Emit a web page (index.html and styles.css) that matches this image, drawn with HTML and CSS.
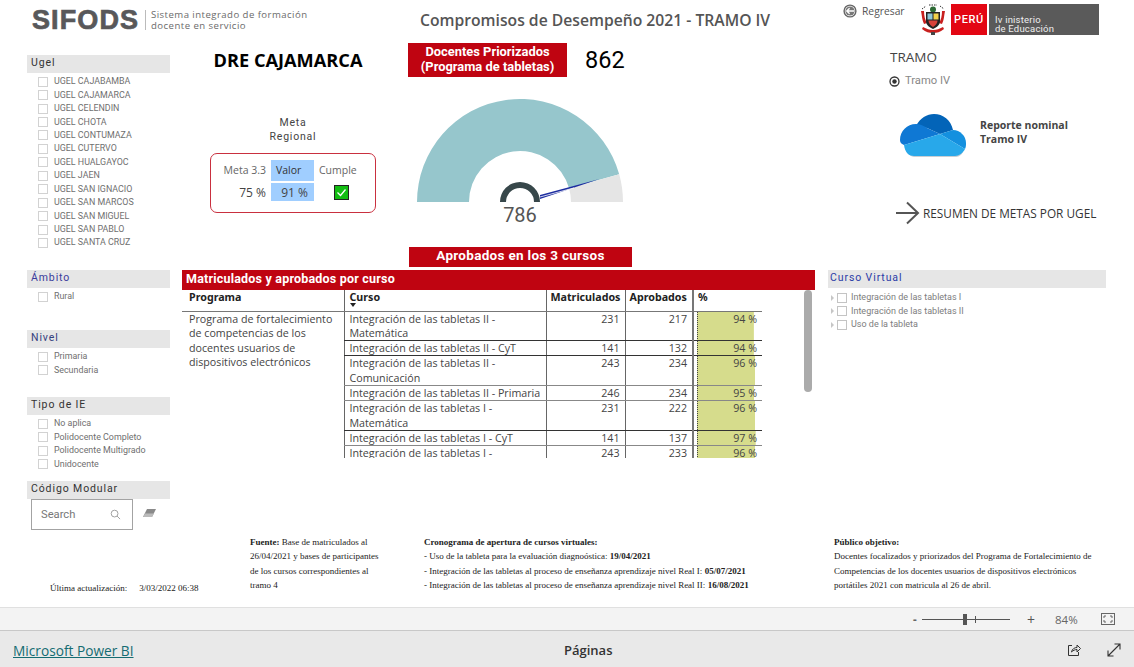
FILE: index.html
```html
<!DOCTYPE html>
<html lang="es">
<head>
<meta charset="utf-8">
<title>Compromisos de Desempeño 2021</title>
<link rel="stylesheet" href="styles.css">
</head>
<body>
<div class="page">
  <main class="canvas">
    <header class="head">
      <div class="brand">
        <span class="brand-name">SIFODS</span>
        <span class="brand-text">Sistema integrado de formación<br>docente en servicio</span>
      </div>
      <h1 class="title">Compromisos de Desempeño 2021 - TRAMO IV</h1>
      <div class="back">
        <svg class="back-icon" viewBox="0 0 14 14"><circle cx="7" cy="7" r="6.6" fill="#666"/><circle cx="7" cy="7" r="5.2" fill="#fff"/><circle cx="7" cy="7" r="4.6" fill="#777"/><path d="M11 7H4M6.6 4.2 3.8 7l2.8 2.8" fill="none" stroke="#fff" stroke-width="1.4"/></svg>
        <span>Regresar</span>
      </div>
      <svg class="crest" viewBox="0 0 26 31">
        <path d="M2 5 6 2M9 1h8M20 2l4 3" stroke="#333" stroke-width="1" stroke-dasharray="1.5 1" fill="none"/>
        <path d="M1 7c1 5 1 9 3 13l3-1c-2-3-3-7-3-12zM25 7c-1 5-1 9-3 13l-3-1c2-3 3-7 3-12z" fill="#c8201f"/>
        <circle cx="13" cy="5.500" r="3" fill="#2d6a35"/>
        <path d="M6 8h14v9c0 4-3 6-7 8-4-2-7-4-7-8z" fill="#222"/>
        <path d="M7.500 9.500h5v6h-5z" fill="#8fc7d8"/><path d="M13.500 9.500h5v6h-5z" fill="#f1d24a"/><path d="M8.500 16.500h9c0 3-2 5-4.500 6.500-2.500-1.500-4.500-3.500-4.500-6.500z" fill="#d8413a"/>
        <path d="M3 23c4 2 6 3 10 3s6-1 10-3l1 2c-4 3-7 4-11 4S6 28 2 25z" fill="#c8201f"/>
        <path d="M11 28h4v3h-4z" fill="#444"/>
      </svg>
      <div class="peru">PERÚ</div>
      <div class="minedu">Iv inisterio<br>de Educación</div>
    </header>

    <aside class="sidebar">
      <section class="filter filter-ugel">
        <h2 class="filter-title">Ugel</h2>
        <ul class="opts">
          <li class="opt"><i class="box"></i>UGEL CAJABAMBA</li>
          <li class="opt"><i class="box"></i>UGEL CAJAMARCA</li>
          <li class="opt"><i class="box"></i>UGEL CELENDIN</li>
          <li class="opt"><i class="box"></i>UGEL CHOTA</li>
          <li class="opt"><i class="box"></i>UGEL CONTUMAZA</li>
          <li class="opt"><i class="box"></i>UGEL CUTERVO</li>
          <li class="opt"><i class="box"></i>UGEL HUALGAYOC</li>
          <li class="opt"><i class="box"></i>UGEL JAEN</li>
          <li class="opt"><i class="box"></i>UGEL SAN IGNACIO</li>
          <li class="opt"><i class="box"></i>UGEL SAN MARCOS</li>
          <li class="opt"><i class="box"></i>UGEL SAN MIGUEL</li>
          <li class="opt"><i class="box"></i>UGEL SAN PABLO</li>
          <li class="opt"><i class="box"></i>UGEL SANTA CRUZ</li>
        </ul>
      </section>
      <section class="filter filter-ambito">
        <h2 class="filter-title blue">Ámbito</h2>
        <ul class="opts"><li class="opt"><i class="box"></i>Rural</li></ul>
      </section>
      <section class="filter filter-nivel">
        <h2 class="filter-title navy">Nivel</h2>
        <ul class="opts">
          <li class="opt"><i class="box"></i>Primaria</li>
          <li class="opt"><i class="box"></i>Secundaria</li>
        </ul>
      </section>
      <section class="filter filter-tipo">
        <h2 class="filter-title">Tipo de IE</h2>
        <ul class="opts">
          <li class="opt"><i class="box"></i>No aplica</li>
          <li class="opt"><i class="box"></i>Polidocente Completo</li>
          <li class="opt"><i class="box"></i>Polidocente Multigrado</li>
          <li class="opt"><i class="box"></i>Unidocente</li>
        </ul>
      </section>
      <section class="filter">
        <h2 class="filter-title">Código Modular</h2>
        <div class="search-row">
          <div class="search">
            <span>Search</span>
            <svg class="search-icon" viewBox="0 0 12 12"><circle cx="5" cy="5" r="3.700" fill="none" stroke="#999"/><path d="M7.700 7.700 11 11" stroke="#999"/></svg>
          </div>
          <svg class="eraser" viewBox="0 0 13 9"><path d="M4 0h9L9 8H0z" fill="#8a8a8a"/><path d="M2 4.500h9L9 8H0z" fill="#bbb"/></svg>
        </div>
      </section>
    </aside>

    <section class="overview">
      <div class="regional">
        <div class="dre">DRE CAJAMARCA</div>
        <div class="meta-title">Meta<br>Regional</div>
        <div class="meta-box">
          <span class="mb-head">Meta 3.3</span>
          <span class="mb-head mb-blue">Valor</span>
          <span class="mb-head mb-center">Cumple</span>
          <span class="mb-val">75 %</span>
          <span class="mb-val mb-blue">91 %</span>
          <span class="mb-check"><svg class="check" viewBox="0 0 15 15"><rect x=".5" y=".5" width="14" height="14" fill="#12bd12" stroke="#222"/><path d="m3.500 7.500 3 3 5-6" fill="none" stroke="#fff" stroke-width="1.300"/></svg></span>
        </div>
      </div>
      <div class="gauge-col">
        <div class="kpi">
          <div class="banner banner-kpi">Docentes Priorizados<br>(Programa de tabletas)</div>
          <div class="kpi-num">862</div>
        </div>
        <svg class="gauge" viewBox="0 0 232 170">
          <path d="M9 125A103 103 0 0 1 211.200 97.300L161.100 111.300A51 51 0 0 0 61 125Z" fill="#96c6cc"/>
          <path d="M211.200 97.300A103 103 0 0 1 215 125H163A51 51 0 0 0 161.100 111.300Z" fill="#e5e5e5"/>
          <path d="M92 125A20 20 0 0 1 132 125H126A14 14 0 0 0 98 125Z" fill="#37474a"/>
          <path d="M132 118 191.500 102 132 122Z" fill="#1c2ca0"/>
          <path d="M132 120 166 110.900" stroke="#fff" stroke-width=".8"/>
          <text class="gauge-num" x="112" y="145" text-anchor="middle">786</text>
        </svg>
        <div class="banner banner-approved">Aprobados en los 3 cursos</div>
      </div>
    </section>

    <aside class="links">
      <div class="tramo-title">TRAMO</div>
      <div class="tramo-opt">
        <svg class="radio" viewBox="0 0 11 11"><circle cx="5.500" cy="5.500" r="4.500" fill="none" stroke="#333" stroke-width="1.300"/><circle cx="5.500" cy="5.500" r="2.200" fill="#333"/></svg>
        <span>Tramo IV</span>
      </div>
      <div class="report">
        <svg class="cloud" viewBox="0 0 66 44">
          <path d="M8 38c2 4 4 5 7 5h40c3 0 6-1 8-5z" fill="#c9ced3"/>
          <path d="M16 12C20 4 27 0 34 0c9 0 17 6 19 16L40 20 27 14z" fill="#0364b8"/>
          <path d="M27 14c-3-2-7-4-11-4C7 10 0 17 0 26c0 2 1 4 4 5l36-11z" fill="#0f78d4"/>
          <path d="M53 16c7 0 13 6 13 13 0 2 0 4-1 6L40 20z" fill="#1490df"/>
          <path d="M4 31 40 20l25 15c-2 4-6 7-10 7H14c-5 0-9-3-10-11z" fill="#28a8ea"/>
        </svg>
        <div class="report-text">Reporte nominal<br>Tramo IV</div>
      </div>
      <div class="summary">
        <svg class="arrow" viewBox="0 0 24 24"><path d="M0 12H22M11 1.500 22 12 11 22.500" fill="none" stroke="#555" stroke-width="2"/></svg>
        <span>RESUMEN DE METAS POR UGEL</span>
      </div>
    </aside>

    <section class="matrix">
      <h2 class="matrix-title">Matriculados y aprobados por curso</h2>
      <div class="table-clip">
        <table class="tbl">
          <colgroup><col class="c-prog"><col class="c-curso"><col class="c-mat"><col class="c-apr"><col class="c-pct"></colgroup>
          <thead>
            <tr><th>Programa</th><th class="sorted">Curso<i class="sort"></i></th><th>Matriculados</th><th>Aprobados</th><th>%</th></tr>
          </thead>
          <tbody>
            <tr class="dark"><td class="prog" rowspan="7">Programa de fortalecimiento de competencias de los docentes usuarios de dispositivos electrónicos</td><td>Integración de las tabletas II - Matemática</td><td class="num">231</td><td class="num">217</td><td class="num pct" style="--bar:94%">94 %</td></tr>
            <tr class="dark"><td>Integración de las tabletas II - CyT</td><td class="num">141</td><td class="num">132</td><td class="num pct" style="--bar:94%">94 %</td></tr>
            <tr><td>Integración de las tabletas II - Comunicación</td><td class="num">243</td><td class="num">234</td><td class="num pct" style="--bar:96%">96 %</td></tr>
            <tr><td>Integración de las tabletas II - Primaria</td><td class="num">246</td><td class="num">234</td><td class="num pct" style="--bar:95%">95 %</td></tr>
            <tr class="dark"><td>Integración de las tabletas I - Matemática</td><td class="num">231</td><td class="num">222</td><td class="num pct" style="--bar:96%">96 %</td></tr>
            <tr><td>Integración de las tabletas I - CyT</td><td class="num">141</td><td class="num">137</td><td class="num pct" style="--bar:97%">97 %</td></tr>
            <tr><td>Integración de las tabletas I - Comunicación</td><td class="num">243</td><td class="num">233</td><td class="num pct" style="--bar:96%">96 %</td></tr>
          </tbody>
        </table>
      </div>
      <div class="scrollbar"></div>
    </section>

    <aside class="course">
      <h2 class="filter-title blue-strong">Curso Virtual</h2>
      <ul class="course-opts">
        <li class="course-opt"><i class="tri"></i><i class="box"></i>Integración de las tabletas I</li>
        <li class="course-opt"><i class="tri"></i><i class="box"></i>Integración de las tabletas II</li>
        <li class="course-opt"><i class="tri"></i><i class="box"></i>Uso de la tableta</li>
      </ul>
    </aside>

    <div class="updated"><span>Última actualización:</span><span>3/03/2022 06:38</span></div>
    <section class="notes">
      <p class="note note-source"><b>Fuente:</b> Base de matriculados al 26/04/2021 y bases de participantes de los cursos correspondientes al tramo 4</p>
      <p class="note note-schedule"><b>Cronograma de apertura de cursos virtuales:</b><br>- Uso de la tableta para la evaluación diagnoóstica: <b>19/04/2021</b><br>- Integración de las tabletas al proceso de enseñanza aprendizaje nivel Real I: <b>05/07/2021</b><br>- Integración de las tabletas al proceso de enseñanza aprendizaje nivel Real II: <b>16/08/2021</b></p>
      <p class="note note-target"><b>Público objetivo:</b><br>Docentes focalizados y priorizados del Programa de Fortalecimiento de Competencias de los docentes usuarios de dispositivos electrónicos portátiles 2021 con matricula al 26 de abril.</p>
    </section>
  </main>

  <div class="zoombar">
    <span class="z-minus">-</span>
    <span class="z-track"><i class="z-tick"></i><i class="z-thumb"></i></span>
    <span class="z-plus">+</span>
    <span class="z-pct">84%</span>
    <svg class="z-fit" viewBox="0 0 14 12"><rect x=".5" y=".5" width="13" height="11" fill="none" stroke="#666"/><path d="M3 5V3h2M9 3h2v2M11 7v2H9M5 9H3V7" fill="none" stroke="#666"/></svg>
  </div>

  <footer class="foot">
    <a class="pbi">Microsoft Power BI</a>
    <span class="pages">Páginas</span>
    <div class="foot-icons">
      <svg class="foot-share" viewBox="0 0 14 14"><path d="M5 2.500H1.500v10h10V9" fill="none" stroke="#333"/><path d="M4.500 9c.5-3 3-4.500 5.500-4.500V2l3.500 3.500L10 9V6.500C8 6.500 6 7.500 4.500 9z" fill="none" stroke="#333"/></svg>
      <svg class="foot-expand" viewBox="0 0 14 14"><path d="M1 13 13 1M7.500 1H13v5.500M1 7.500V13h5.500" fill="none" stroke="#333" stroke-width="1.100"/></svg>
    </div>
  </footer>
</div>
</body>
</html>
```

FILE: styles.css
```css
* { box-sizing: border-box; }
html, body { margin: 0; padding: 0; background: #fff; }
body { font-family: "Open Sans", "Noto Sans", sans-serif; color: #333; overflow: hidden; }
h1, h2, p, ul { margin: 0; padding: 0; }
ul { list-style: none; }
i { display: block; }

.page { width: 1134px; height: 667px; display: flex; flex-direction: column; }
.canvas {
  height: 607px;
  display: grid;
  grid-template-columns: 182px 646px 306px;
  grid-template-rows: 43px 227px 265px 72px;
}

/* header */
.head { grid-column: 1 / -1; grid-row: 1; display: flex; align-items: flex-start; }
.brand { width: 420px; padding: 6px 0 0 32px; display: flex; align-items: center; }
.brand-name { font-family: "Liberation Sans", sans-serif; font-weight: 700; font-size: 27px; line-height: 28px; letter-spacing: 1.100px; color: #58585a; -webkit-text-stroke: .7px #58585a; width: 113px; }
.brand-text { border-left: 1px solid #bbb; padding-left: 5px; height: 20px; font-size: 9.600px; line-height: 10.500px; letter-spacing: .45px; color: #6b6b6b; white-space: nowrap; }
.title { width: 423px; font-size: 15.700px; line-height: 20px; font-weight: 600; color: #555; padding-top: 10px; white-space: nowrap; }
.back { width: 77px; display: flex; align-items: center; gap: 5px; font-size: 10.300px; color: #555; height: 14px; margin-top: 4px; }
.back-icon { width: 14px; height: 14px; }
.crest { width: 26px; height: 31px; margin: 4px 5px 0 0; }
.peru { width: 36px; height: 31px; margin-top: 4px; background: #e30613; color: #fff; font: 500 11px/31px Roboto, sans-serif; letter-spacing: .6px; text-align: center; }
.minedu { width: 110px; height: 31px; margin: 4px 0 0 2px; background: #5a5a5a; color: #eee; font: 400 9.500px/9px Roboto, sans-serif; padding: 11px 0 0 6px; letter-spacing: .2px; white-space: nowrap; }

/* sidebar */
.sidebar { grid-column: 1; grid-row: 2 / 4; padding: 12px 12px 0 27px; display: flex; flex-direction: column; }
.filter-ugel { height: 215px; }
.filter-ambito { height: 60px; }
.filter-nivel { height: 67px; }
.filter-tipo { height: 84px; }
.filter-title { background: #e6e6e6; height: 18px; font: 400 10.500px/15.500px Roboto, sans-serif; letter-spacing: .9px; color: #333; padding-left: 4px; }
.blue { color: #3a3a9c; }
.navy { color: #35407e; }
.blue-strong { color: #2b3ca6; padding-left: 2px; }
.opts { padding: 2px 0 0 11px; }
.opt { display: flex; align-items: center; height: 13.450px; font: 400 8.900px/13px Roboto, sans-serif; color: #6f6f6f; white-space: nowrap; }
.box { width: 10px; height: 10px; border: 1px solid #d2d2d2; background: #fff; flex: none; margin-right: 6px; }
.search-row { display: flex; align-items: center; gap: 10px; padding-left: 4px; }
.search { width: 102px; height: 31px; border: 1.500px solid #a3a3a3; display: flex; align-items: center; justify-content: space-between; padding: 0 11px 0 9px; font: 400 11.200px/14px Roboto, sans-serif; color: #777; }
.search-icon { width: 11px; height: 11px; }
.eraser { width: 13px; height: 9px; margin-top: -3px; }

/* overview */
.overview { grid-column: 2; grid-row: 2; display: flex; }
.regional { width: 226px; padding-left: 28px; }
.dre { width: 166px; font-size: 18.200px; line-height: 26px; font-weight: 700; color: #000; padding-top: 4px; height: 30px; text-align: center; margin-left: -5px; white-space: nowrap; }
.meta-title { width: 166px; margin-top: 43px; text-align: center; font: 400 10.500px/13.500px Roboto, sans-serif; letter-spacing: .8px; color: #444; }
.meta-box { width: 166px; height: 60px; margin-top: 10px; border: 1px solid #c9303f; border-radius: 7px; padding: 6px 0 0 0; display: grid; grid-template-columns: 55px 43px 43px; grid-template-rows: 21px 18px; column-gap: 5px; row-gap: 2px; font-size: 10.500px; justify-content: start; }
.mb-head { line-height: 20px; color: #666; text-align: right; white-space: nowrap; }
.mb-blue { background: #a0ceff; color: #333; text-align: left; padding-left: 5px; }
.mb-center { text-align: left; padding-left: 0; }
.mb-val { line-height: 19px; font-size: 12px; color: #444; text-align: right; }
.mb-val.mb-blue { text-align: right; padding: 0 6px 0 0; }
.mb-check { display: flex; justify-content: center; align-items: center; padding-left: 1px; }
.check { width: 15px; height: 15px; }

.gauge-col { width: 240px; }
.kpi { display: flex; align-items: center; height: 34px; }
.banner { background: #bf0411; color: #fff; text-align: center; font-family: Roboto, sans-serif; font-weight: 700; }
.banner-kpi { width: 159px; height: 34px; font-size: 12.900px; line-height: 15px; padding-top: 1px; }
.kpi-num { margin-left: 18px; font: 400 23.500px/34px Roboto, sans-serif; color: #000; }
.gauge { display: block; width: 232px; height: 170px; }
.gauge-num { font: 400 20px Roboto, sans-serif; fill: #555; }
.banner-approved { width: 223px; height: 20px; margin-left: 1px; font-size: 13.500px; line-height: 17px; letter-spacing: .3px; }

/* links */
.links { grid-column: 3; grid-row: 2; padding: 6px 0 0 62px; }
.tramo-title { font-size: 13.500px; line-height: 17px; color: #444; }
.tramo-opt { display: flex; align-items: center; gap: 5px; margin-top: 7px; height: 16px; font: 400 11.200px/16px Roboto, sans-serif; color: #888; margin-left: -1px; }
.radio { width: 11px; height: 11px; }
.report { display: flex; align-items: center; gap: 14px; margin: 25px 0 0 10px; }
.cloud { width: 66px; height: 44px; flex: none; }
.report-text { font-size: 10.500px; line-height: 14px; font-weight: 700; color: #444; white-space: nowrap; margin-top: -8px; }
.summary { display: flex; align-items: center; gap: 3px; margin: 43px 0 0 6px; font-size: 11.800px; color: #333; white-space: nowrap; }
.arrow { width: 24px; height: 24px; flex: none; }

/* matrix */
.matrix { grid-column: 2; grid-row: 3; position: relative; }
.matrix-title { width: 633px; height: 20px; background: #bf0411; color: #fff; font: 700 12.500px/18px Roboto, sans-serif; letter-spacing: .2px; padding-left: 4px; }
.table-clip { width: 580px; height: 168px; overflow: hidden; }
.tbl { border-collapse: collapse; table-layout: fixed; width: 580px; font-size: 10.700px; line-height: 14.300px; color: #444; }
.c-prog { width: 162px; }
.c-curso { width: 202px; }
.c-mat { width: 79px; }
.c-apr { width: 68px; }
.c-pct { width: 69px; }
.tbl th { height: 21px; padding: 0 5px; text-align: left; font: 700 10.700px/14px "Noto Sans", sans-serif; color: #222; vertical-align: top; border-left: 1px solid #666; border-bottom: 1px solid #777; white-space: nowrap; }
.tbl th:first-child { border-left: 0; padding-left: 7px; }
.tbl th:nth-child(3), .tbl th:nth-child(4), .tbl th:nth-child(5) { padding-left: 4px; }
.tbl th:nth-child(5) { border-left: 2px solid #777; }
.sorted { position: relative; }
.sort { position: absolute; left: 5px; top: 13px; width: 0; height: 0; border: 3px solid transparent; border-top: 4px solid #222; border-bottom: 0; }
.tbl td { padding: 0 5px; vertical-align: top; border-left: 1px solid #666; border-bottom: 1px solid #888; }
.tbl tr.dark td { border-bottom-color: #333; }
.tbl td.prog, .tbl tr.dark td.prog { border: 0; padding: 0 7px; line-height: 14.500px; }
.num { text-align: right; white-space: nowrap; }
.tbl td.pct { border-left: 2px solid #777; padding-right: 5px; background: repeating-linear-gradient(#444 0 1px, transparent 1px 2px) no-repeat 3px 0 / 1px 100%, linear-gradient(#d6dc8c, #d6dc8c) no-repeat 3px 0 / calc(var(--bar) * .89) 100%; }
.scrollbar { position: absolute; left: 622px; top: 20px; width: 8px; height: 102px; border-radius: 4px; background: #ababab; }

/* course filter */
.course { grid-column: 3; grid-row: 3; width: 278px; }
.course-opts { padding: 3px 0 0 3px; }
.course-opt { display: flex; align-items: center; height: 13.500px; font: 400 9px/13px Roboto, sans-serif; color: #7d7d7d; white-space: nowrap; }
.course-opt .box { margin-right: 4px; border-color: #c4c4c4; }
.tri { width: 0; height: 0; border: 3px solid transparent; border-left: 3px solid #c6c6c6; border-right: 0; margin-right: 3px; }

/* notes */
.updated { grid-column: 1; grid-row: 4; padding: 48px 0 0 50px; display: flex; gap: 12px; font: 400 9px/11px "Liberation Serif", serif; color: #222; white-space: nowrap; }
.notes { grid-column: 2 / 4; grid-row: 4; display: flex; font: 400 9px/14.350px "Liberation Serif", serif; color: #222; }
.note { flex: none; }
.note-source { width: 133px; margin-left: 68px; }
.note-schedule { width: 410px; margin-left: 41px; white-space: nowrap; }
.note-target { width: 262px; }

/* zoom bar */
.zoombar { height: 24px; background: #f3f3f3; border-top: 1px solid #e0e0e0; border-bottom: 1px solid #c8c8c8; display: flex; align-items: center; padding-left: 913px; color: #666; font-size: 11.500px; }
.z-minus { width: 9px; font-weight: 700; }
.z-track { position: relative; width: 88px; height: 1px; background: #555; }
.z-thumb { position: absolute; left: 41px; top: -5px; width: 4px; height: 11px; background: #555; }
.z-tick { position: absolute; left: 53px; top: -3px; width: 1px; height: 7px; background: #555; }
.z-plus { margin-left: 17px; width: 28px; font-size: 14px; color: #555; }
.z-pct { width: 46px; }
.z-fit { width: 14px; height: 12px; }

/* footer */
.foot { flex: 1; background: #e9e9e9; display: flex; align-items: center; padding: 2px 0 0 13px; }
.pbi { width: 551px; font-size: 13.700px; color: #146c72; text-decoration: underline; white-space: nowrap; }
.pages { width: 503px; font-size: 13px; font-weight: 600; color: #333; }
.foot-icons { display: flex; gap: 26px; }
.foot-share { width: 14px; height: 14px; }
.foot-expand { width: 14px; height: 14px; }
```
